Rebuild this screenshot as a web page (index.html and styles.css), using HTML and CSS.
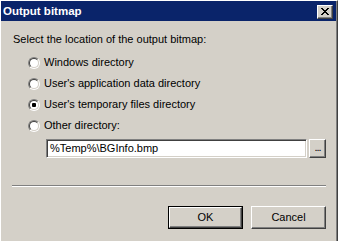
FILE: index.html
```html
<!DOCTYPE html>
<html lang="en">
	<head>
	<meta charset="UTF-8" />
	<title>Output bitmap</title>
	<link rel="stylesheet" href="styles.css">
	</head>
	<body>
		<div class="window">
			<div class="titlebar">
				<span class="title">Output bitmap</span>
				<span class="close">
					<svg width="8" height="7" viewBox="0 0 8 7">
						<path d="M0 0h2v1h-2z M6 0h2v1h-2z M1 1h2v1h-2z M5 1h2v1h-2z M2 2h4v1h-4z M3 3h2v1h-2z M2 4h4v1h-4z M1 5h2v1h-2z M5 5h2v1h-2z M0 6h2v1h-2z M6 6h2v1h-2z" fill="#000"/>
					</svg>
				</span>
			</div>
			<div class="content">
				<p class="prompt">Select the location of the output bitmap:</p>
				<div class="options">
					<div class="option"><span class="radio"><span class="radio-inner"></span></span>Windows directory</div>
					<div class="option"><span class="radio"><span class="radio-inner"></span></span>User's application data directory</div>
					<div class="option"><span class="radio"><span class="radio-inner"><span class="dot"></span></span></span>User's temporary files directory</div>
					<div class="option"><span class="radio"><span class="radio-inner"></span></span>Other directory:</div>
				</div>
				<div class="path-row">
					<div class="field">%Temp%\BGInfo.bmp</div>
					<div class="btn browse">...</div>
				</div>
				<div class="separator"></div>
				<div class="actions">
					<div class="btn default"><span class="btn-face">OK</span></div>
					<div class="btn"><span class="btn-face">Cancel</span></div>
				</div>
			</div>
		</div>
	</body>
</html>
```

FILE: styles.css
```css
* {
	padding: 0;
	margin: 0;
	box-sizing: border-box;
}

body {
	background: #d4d0c8;
	font-family: 'Liberation Sans', Arial, sans-serif;
	font-size: 11px;
	color: #000;
	overflow: hidden;
}

.window {
	width: 338px;
	height: 250px;
	background: #d4d0c8;
	border: 1px solid;
	border-color: #fff #404040 #404040 #fff;
	padding: 0 1px 1px 0;
	box-shadow: inset -1px -1px #808080;
}

.titlebar {
	height: 20px;
	background: #0a246a;
	display: flex;
	align-items: center;
	justify-content: space-between;
	padding: 0 3px 0 2px;
}

.title {
	color: #fff;
	font-weight: bold;
	font-size: 11.5px;
	line-height: 13px;
}

.close {
	width: 16px;
	height: 14px;
	background: #d4d0c8;
	border: 1px solid;
	border-color: #fff #404040 #404040 #fff;
	box-shadow: inset -1px -1px #808080;
	display: flex;
	padding: 2px 0 0 3px;
	margin-top: 1px;
}

.content {
	padding: 0 10px 0 11px;
}

.prompt {
	margin-top: 12px;
	line-height: 13px;
	padding-left: 1px;
}

.options {
	margin-top: 6px;
	padding-left: 16px;
}

.option {
	height: 21px;
	display: flex;
	align-items: center;
	gap: 4px;
	line-height: 13px;
}

.radio {
	width: 12px;
	height: 12px;
	border-radius: 50%;
	border: 1px solid;
	border-color: #808080 #fff #fff #808080;
	display: flex;
}

.radio-inner {
	flex: 1;
	border-radius: 50%;
	border: 1px solid;
	border-color: #404040 #d4d0c8 #d4d0c8 #404040;
	background: #fff;
	display: flex;
	align-items: center;
	justify-content: center;
}

.dot {
	width: 4px;
	height: 4px;
	background: #000;
	border-radius: 1px;
}

.path-row {
	margin-top: 3px;
	padding-left: 34px;
	display: flex;
	gap: 2px;
}

.field {
	width: 261px;
	height: 19px;
	background: #fff;
	border: 1px solid;
	border-color: #808080 #fff #fff #808080;
	box-shadow: inset 1px 1px #404040, inset -1px -1px #d4d0c8;
	padding: 2px 0 0 3px;
	line-height: 13px;
}

.btn {
	background: #d4d0c8;
	border: 1px solid;
	border-color: #fff #404040 #404040 #fff;
	box-shadow: inset -1px -1px #808080;
	display: flex;
	align-items: center;
	justify-content: center;
	line-height: 13px;
}

.browse {
	width: 17px;
	height: 19px;
	align-items: flex-end;
	padding-bottom: 3px;
	letter-spacing: -1px;
}

.separator {
	margin-top: 27px;
	height: 2px;
	border-top: 1px solid #808080;
	border-bottom: 1px solid #fff;
}

.actions {
	margin-top: 19px;
	display: flex;
	justify-content: flex-end;
	gap: 8px;
}

.actions .btn {
	width: 75px;
	height: 23px;
}

.actions .btn.default {
	border: 1px solid #000;
	box-shadow: none;
	padding: 0;
}

.default .btn-face {
	width: 100%;
	height: 100%;
	border: 1px solid;
	border-color: #fff #404040 #404040 #fff;
	box-shadow: inset -1px -1px #808080;
	display: flex;
	align-items: center;
	justify-content: center;
}
```
